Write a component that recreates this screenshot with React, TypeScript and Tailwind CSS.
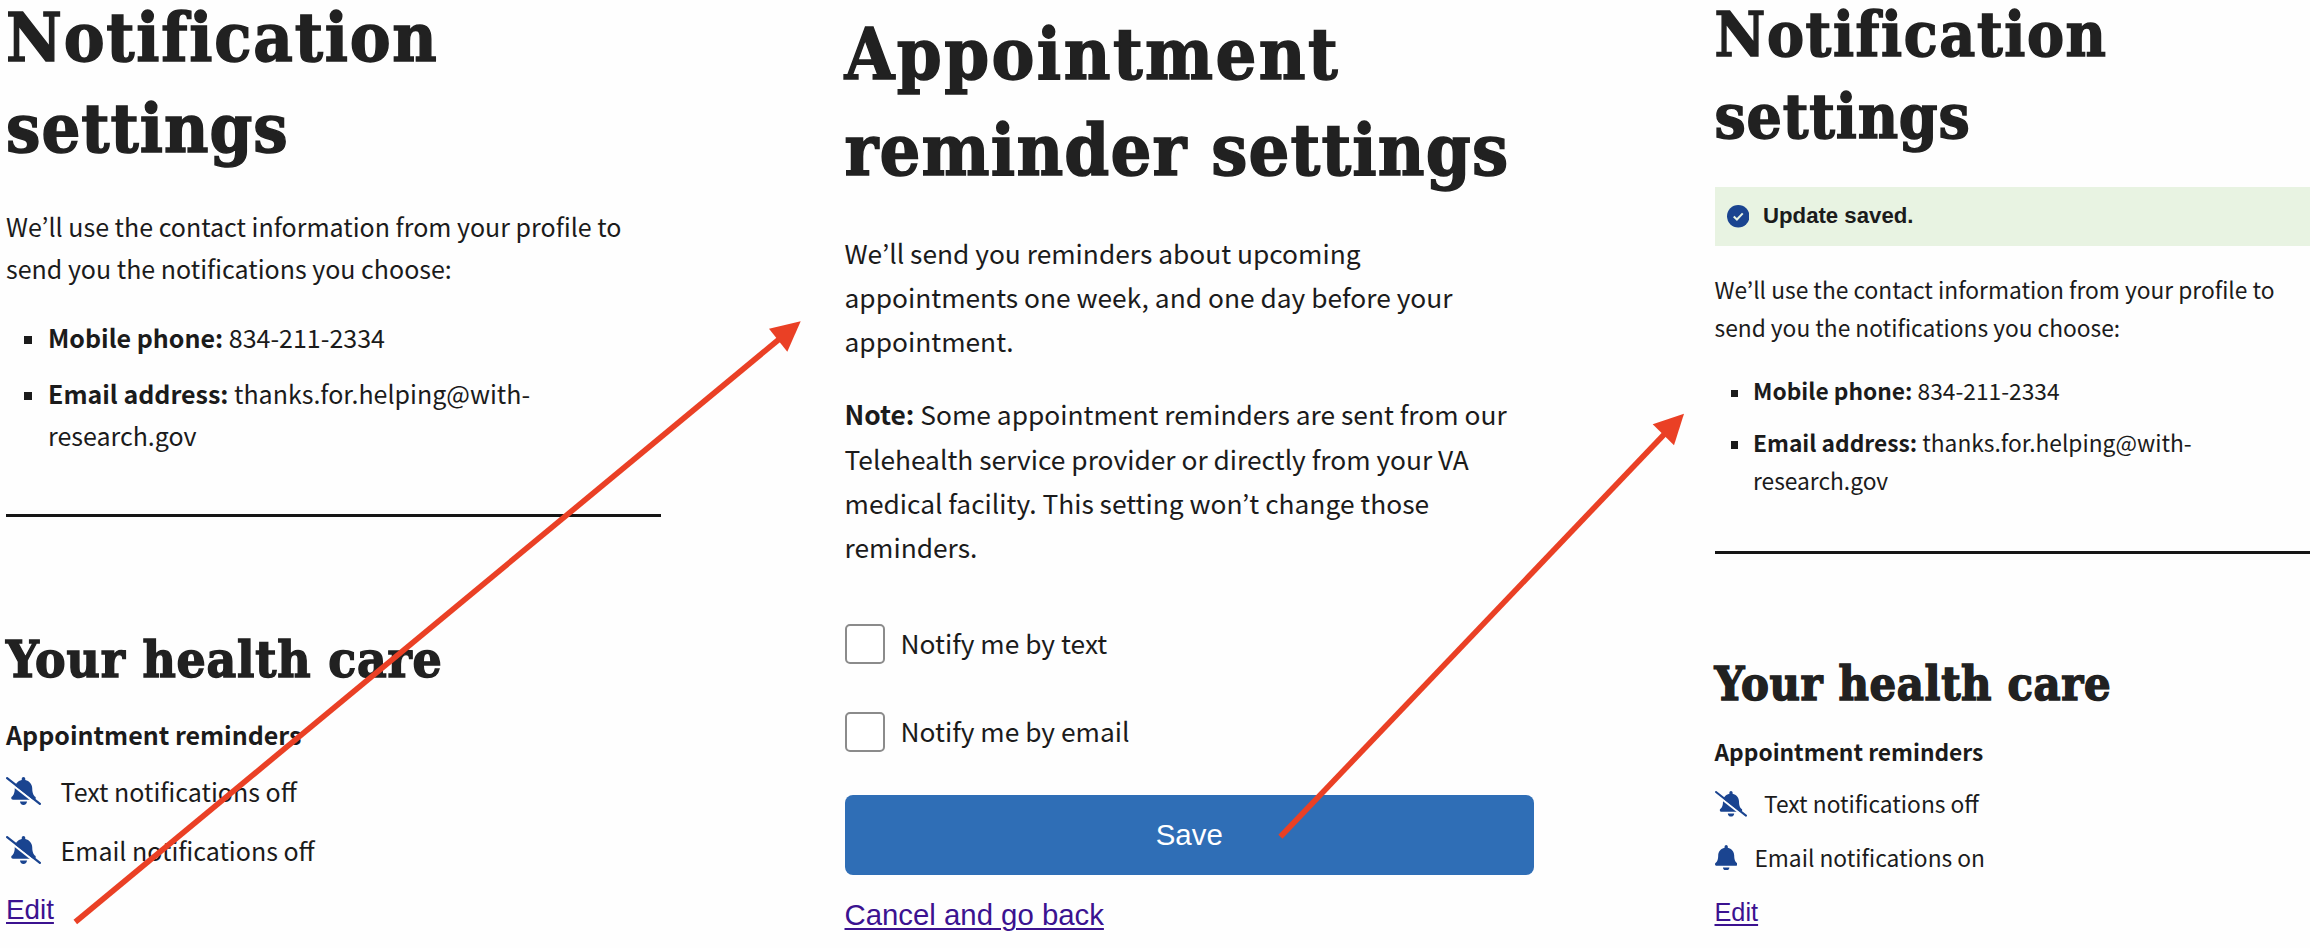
const SLAB =
  "font-['DejaVu_Serif_Condensed','DejaVu_Serif',serif] font-bold [font-stretch:condensed] text-[#212121] [-webkit-text-stroke:1.4px_#212121] whitespace-nowrap";
const BODY = "font-['Noto_Sans_CJK_KR','Noto_Sans',sans-serif] text-[#1b1b1b]";
const ARIAL = "font-['Liberation_Sans',Arial,sans-serif]";

const BELL =
  "M224 512c35.32 0 63.97-28.65 63.97-64H160.03c0 35.35 28.65 64 63.97 64zm215.39-149.71c-19.32-20.76-55.47-51.99-55.47-154.29 0-77.7-54.48-139.9-127.94-155.16V32c0-17.67-14.32-32-31.98-32s-31.98 14.33-31.98 32v20.84C118.56 68.1 64.08 130.3 64.08 208c0 102.3-36.15 133.53-55.47 154.29-6 6.45-8.66 14.16-8.61 21.71.11 16.4 12.98 32 32.1 32h383.8c19.12 0 32-15.6 32.1-32 .05-7.55-2.61-15.27-8.61-21.71z";

function BellIcon({ className }: { className: string }) {
  return (
    <svg className={className} viewBox="0 0 448 512" fill="#1a4490">
      <path d={BELL} />
    </svg>
  );
}

function BellSlashIcon({ className }: { className: string }) {
  return (
    <svg className={className} viewBox="0 0 640 512" fill="#1a4490">
      <path d={BELL} transform="translate(96 0)" />
      <path d="M-5 47L599 523" stroke="#fefefe" strokeWidth="42" />
      <path d="M20 20L620 492" stroke="#1a4490" strokeWidth="40" strokeLinecap="round" />
    </svg>
  );
}

function CheckIcon({ className }: { className: string }) {
  return (
    <svg className={className} viewBox="0 0 22 22" fill="none">
      <circle cx="11" cy="11" r="11" fill="#1a4490" />
      <path d="M6.6 11.2L9.7 14.2L15.4 8.2" stroke="#e7f3e3" strokeWidth="2" />
    </svg>
  );
}

function BeforePanel() {
  return (
    <section className={`flex w-[655px] shrink-0 flex-col items-start text-[25px] leading-[42px] whitespace-nowrap ${BODY}`}>
      <h1 className={`text-[68px] ${SLAB}`}>
        <span className="block leading-[75px] tracking-[1.75px]">Notification</span>
        <span className="mt-2 block leading-[91px] tracking-[1px]">settings</span>
      </h1>
      <p className="mt-[31px]">
        We’ll use the contact information from your profile to
        <br />
        send you the notifications you choose:
      </p>
      <ul className="mt-[27.4px] flex flex-col gap-3.5 pl-[18px]">
        <li className="flex gap-[16px]">
          <span className="mt-5 size-2 shrink-0 bg-[#1b1b1b]" />
          <span>
            <b>Mobile phone:</b> 834-211-2334
          </span>
        </li>
        <li className="flex gap-[16px]">
          <span className="mt-5 size-2 shrink-0 bg-[#1b1b1b]" />
          <span>
            <b>Email address:</b> thanks.for.helping@with-
            <br />
            research.gov
          </span>
        </li>
      </ul>
      <hr className="mt-[57.6px] h-[3px] w-full border-0 bg-[#151515]" />
      <h2 className={`mt-[109.5px] text-[51px] leading-[66px] tracking-[0.8px] ${SLAB}`}>Your health care</h2>
      <h3 className="mt-[20.5px] font-bold">Appointment reminders</h3>
      <div className="mt-[15px] flex items-center gap-[19.5px]">
        <BellSlashIcon className="h-7 w-[35px]" />
        <span>Text notifications off</span>
      </div>
      <div className="mt-[17.2px] flex items-center gap-[19.5px]">
        <BellSlashIcon className="h-7 w-[35px]" />
        <span>Email notifications off</span>
      </div>
      <a className={`mt-[17.7px] text-[27.8px] text-[#3b1290] underline decoration-2 underline-offset-[3px] ${ARIAL}`}>Edit</a>
    </section>
  );
}

function EditPanel() {
  return (
    <section className={`flex w-[689.5px] shrink-0 flex-col items-start text-[26.33px] leading-[44.1px] whitespace-nowrap ${BODY}`}>
      <h1 className={`mt-1.5 text-[71.5px] leading-[96px] ${SLAB}`}>
        <span className="block tracking-[2.4px]">Appointment</span>
        <span className="block tracking-[1.15px]">reminder settings</span>
      </h1>
      <p className="mt-[33px]">
        We’ll send you reminders about upcoming
        <br />
        appointments one week, and one day before your
        <br />
        appointment.
      </p>
      <p className="mt-[29.2px]">
        <b>Note:</b> Some appointment reminders are sent from our
        <br />
        Telehealth service provider or directly from your VA
        <br />
        medical facility. This setting won’t change those
        <br />
        reminders.
      </p>
      <label className="mt-[55px] flex h-10 items-center gap-4">
        <span className="size-10 rounded-[5px] border-2 border-[#8b8b8b] bg-white" />
        <span className="pb-[2px]">Notify me by text</span>
      </label>
      <label className="mt-[48.5px] flex h-10 items-center gap-4">
        <span className="size-10 rounded-[5px] border-2 border-[#8b8b8b] bg-white" />
        <span className="pb-[2px]">Notify me by email</span>
      </label>
      <button className={`mt-[42.5px] h-[80.5px] w-full rounded-lg bg-[#2f6eb6] text-[29.4px] text-white ${ARIAL}`}>Save</button>
      <a className={`mt-[18px] text-[29.35px] text-[#3b1290] underline decoration-2 underline-offset-[3px] ${ARIAL}`}>
        Cancel and go back
      </a>
    </section>
  );
}

function AfterPanel() {
  return (
    <section className={`flex min-w-0 flex-1 flex-col items-start text-[22.75px] leading-[38.2px] whitespace-nowrap ${BODY}`}>
      <h1 className={`text-[61.8px] ${SLAB}`}>
        <span className="block leading-[69.5px] tracking-[1.6px]">Notification</span>
        <span className="mt-[6.5px] block leading-[82.5px] tracking-[0.8px]">settings</span>
      </h1>
      <div className={`mt-[28.5px] flex h-[59px] w-full items-center gap-3.5 bg-[#e8f3e2] pl-3 text-[22.2px] font-bold ${ARIAL}`}>
        <CheckIcon className="size-[22.5px]" />
        <span>Update saved.</span>
      </div>
      <p className="mt-[24.8px]">
        We’ll use the contact information from your profile to
        <br />
        send you the notifications you choose:
      </p>
      <ul className="mt-[25px] flex flex-col gap-[13.1px] pl-4">
        <li className="flex gap-[15px]">
          <span className="mt-[17.5px] size-[7.5px] shrink-0 bg-[#1b1b1b]" />
          <span>
            <b>Mobile phone:</b> 834-211-2334
          </span>
        </li>
        <li className="flex gap-[15px]">
          <span className="mt-[17.5px] size-[7.5px] shrink-0 bg-[#1b1b1b]" />
          <span>
            <b>Email address:</b> thanks.for.helping@with-
            <br />
            research.gov
          </span>
        </li>
      </ul>
      <hr className="mt-[51.5px] h-[3px] w-full border-0 bg-[#151515]" />
      <h2 className={`mt-[99.5px] text-[46.5px] leading-[60px] tracking-[0.65px] ${SLAB}`}>Your health care</h2>
      <h3 className="mt-[19.5px] font-bold">Appointment reminders</h3>
      <div className="mt-[13.2px] flex items-center gap-[17.5px]">
        <BellSlashIcon className="h-[25.6px] w-8" />
        <span>Text notifications off</span>
      </div>
      <div className="mt-[15.6px] flex items-center gap-[17.5px]">
        <BellIcon className="h-[25.6px] w-[22.4px]" />
        <span>Email notifications on</span>
      </div>
      <a className={`mt-[15.8px] text-[25.3px] leading-[38px] text-[#3b1290] underline decoration-2 underline-offset-[3px] ${ARIAL}`}>
        Edit
      </a>
    </section>
  );
}

function FlowArrows() {
  return (
    <svg className="pointer-events-none absolute inset-0" width="2310" height="948" viewBox="0 0 2310 948" fill="#ea4025" stroke="none">
      <path d="M75.3 922 L780 338.5" stroke="#ea4025" strokeWidth="5.6" />
      <path d="M800.7 321.3 L769 328.7 L787.3 351.7 Z" />
      <path d="M1280.4 836.7 L1665 433.5" stroke="#ea4025" strokeWidth="5.6" />
      <path d="M1684 413.7 L1652.7 424.3 L1674 445.3 Z" />
    </svg>
  );
}

export default function App() {
  return (
    <main className="relative flex h-[948px] w-[2310px] overflow-hidden bg-[#fefefe] pl-1.5">
      <BeforePanel />
      <div className="w-[183.5px] shrink-0" />
      <EditPanel />
      <div className="w-[180.5px] shrink-0" />
      <AfterPanel />
      <FlowArrows />
    </main>
  );
}
